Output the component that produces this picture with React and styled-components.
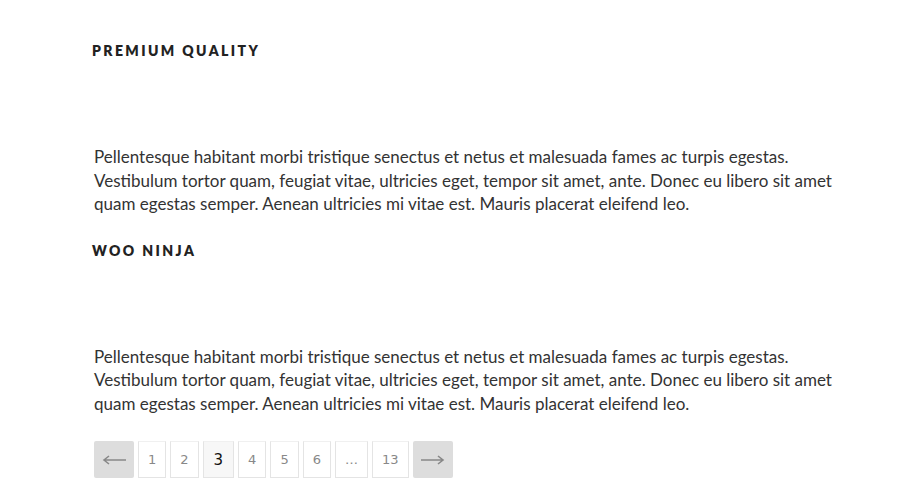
import React from 'react'
import styled, { createGlobalStyle } from 'styled-components'

const GlobalStyle = createGlobalStyle`
body {
  margin:0;
  background:#ffffff;
  font-family:Lato, "Liberation Sans", sans-serif;
}
`

const Page = styled.div`
padding:41px 76px 0 92px;
`

const Item = styled.section`
display:flex;
flex-direction:column;
`

const Title = styled.h2`
margin:0;
font-size:14px;
line-height:20px;
font-weight:800;
letter-spacing:2.4px;
text-transform:uppercase;
color:#222222;
`

const Media = styled.div`
height:84px;
`

const Text = styled.p`
margin:0 0 25px 2px;
font-size:17px;
line-height:23.5px;
color:#333333;
`

const Pagination = styled.nav`
display:flex;
align-items:stretch;
gap:4px;
margin:1px 0 0 2px;
height:37px;
`

const Arrow = styled.button`
width:40px;
border:0;
border-radius:2px;
background:#dddddd;
color:#888888;
padding:0;
display:flex;
align-items:center;
justify-content:center;
`

const PageLink = styled.span`
display:flex;
align-items:center;
justify-content:center;
padding:0 ${p => (p.$current ? '10px' : '9px')};
border:1px solid #e4e4e4;
border-top-color:#f0f0f0;
background:${p => (p.$current ? '#f7f7f7' : '#ffffff')};
color:${p => (p.$current ? '#111111' : '#888888')};
font-family:"DejaVu Sans", Verdana, sans-serif;
font-size:${p => (p.$current ? '15px' : '13px')};
`

const ArrowIcon = ({ left }) => (
  <svg width="24" height="10" viewBox="0 0 24 10" style={left ? { transform: 'scaleX(-1)' } : undefined}>
    <path d="M0 5 H22 M17 1 L22 5 L17 9" fill="none" stroke="#888888" strokeWidth="1.6" />
  </svg>
)

const items = [
  { title: 'Premium Quality' },
  { title: 'Woo Ninja' },
]

const body = 'Pellentesque habitant morbi tristique senectus et netus et malesuada fames ac turpis egestas. Vestibulum tortor quam, feugiat vitae, ultricies eget, tempor sit amet, ante. Donec eu libero sit amet quam egestas semper. Aenean ultricies mi vitae est. Mauris placerat eleifend leo.'

const pages = ['1', '2', '3', '4', '5', '6', '…', '13']

const App = () => (
  <>
    <GlobalStyle />
    <Page>
      { items.map(item => (
        <Item key={ item.title }>
          <Title>{ item.title }</Title>
          <Media />
          <Text>{ body }</Text>
        </Item>
      )) }
      <Pagination>
        <Arrow aria-label="previous"><ArrowIcon left /></Arrow>
        { pages.map(p => (
          <PageLink key={ p } $current={ p === '3' }>{ p }</PageLink>
        )) }
        <Arrow aria-label="next"><ArrowIcon /></Arrow>
      </Pagination>
    </Page>
  </>
)

export default App
